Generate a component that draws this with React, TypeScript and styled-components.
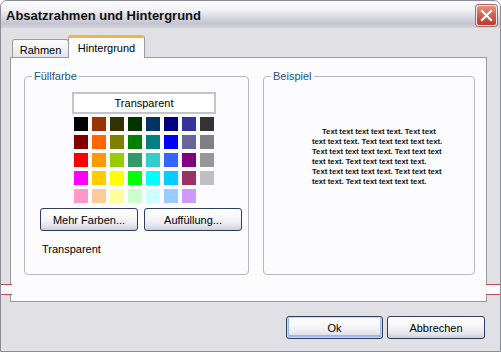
import styled, { createGlobalStyle } from "styled-components";

const GlobalStyle = createGlobalStyle`
  body {
    margin: 0;
    background: #ffffff;
    font-family: "Liberation Sans", Arial, sans-serif;
  }
`;

const Window = styled.div`
  position: relative;
  box-sizing: border-box;
  width: 501px;
  height: 352px;
  display: flex;
  flex-direction: column;
  background: #e1e0e5;
  border: 1px solid #8c8c98;
  border-radius: 7px 7px 0 0;
  overflow: hidden;
`;

const TitleBar = styled.div`
  display: flex;
  align-items: center;
  justify-content: space-between;
  height: 27px;
  padding: 0 3px 0 5px;
  background: linear-gradient(#fdfdfe 0%, #f4f4f7 30%, #d9d9e2 60%, #c3c3cf 85%, #d6d6de 100%);
`;

const Title = styled.span`
  font-size: 13px;
  font-weight: bold;
  color: #111111;
  padding-top: 2px;
`;

const CloseButton = styled.div`
  box-sizing: border-box;
  width: 21px;
  height: 21px;
  margin-top: 2px;
  display: flex;
  align-items: center;
  justify-content: center;
  border: 1px solid #f3e6e6;
  border-radius: 3px;
  background: linear-gradient(#e9937f, #d15a44 55%, #b93a2b);
  box-shadow: 0 0 0 1px #a86a66;
`;

const Body = styled.div`
  flex: 1;
  display: flex;
  flex-direction: column;
  padding: 7px 12px 0 9px;
`;

const TabStrip = styled.div`
  display: flex;
  align-items: flex-end;
  height: 22px;
  padding-left: 2px;
  position: relative;
  z-index: 1;
`;

const Tab = styled.div<{ $active?: boolean }>`
  box-sizing: border-box;
  display: flex;
  align-items: center;
  justify-content: center;
  font-size: 11px;
  color: #000000;
  border: 1px solid #9a9aa4;
  border-bottom: none;
  border-radius: 3px 3px 0 0;
  height: ${({ $active }) => ($active ? "23px" : "18px")};
  width: ${({ $active }) => ($active ? "77px" : "57px")};
  margin-bottom: ${({ $active }) => ($active ? "-1px" : "0")};
  margin-left: ${({ $active }) => ($active ? "-1px" : "0")};
  padding-top: ${({ $active }) => ($active ? "0" : "2px")};
  background: ${({ $active }) =>
    $active ? "#fcfcfe" : "linear-gradient(#fefefe, #f0f0f4 60%, #e3e3ea)"};
  border-top: ${({ $active }) => ($active ? "3px solid #f0b44c" : "1px solid #9a9aa4")};
`;

const Panel = styled.div`
  box-sizing: border-box;
  width: 477px;
  height: 245px;
  display: flex;
  gap: 14px;
  padding: 12px 0 0 13px;
  background: #fcfcfe;
  border: 1px solid #9a9aa4;
`;

const Group = styled.fieldset<{ $width: number }>`
  box-sizing: border-box;
  width: ${({ $width }) => $width}px;
  height: 205px;
  margin: 0;
  padding: 0;
  min-width: 0;
  border: 1px solid #b8b8c2;
  border-radius: 4px;
`;

const Legend = styled.legend`
  margin-left: 7px;
  padding: 0 2px;
  font-size: 11px;
  line-height: 13px;
  color: #1d5486;
`;

const TransparentBox = styled.div`
  box-sizing: border-box;
  width: 144px;
  height: 22px;
  margin: 9px 0 0 47px;
  display: flex;
  align-items: center;
  justify-content: center;
  border: 2px solid #c4c4cc;
  background: #ffffff;
  font-size: 11px;
  color: #000000;
`;

const Swatches = styled.div`
  display: grid;
  grid-template-columns: repeat(8, 14px);
  grid-auto-rows: 14px;
  gap: 4px;
  margin: 3px 0 0 49px;
`;

const Swatch = styled.div<{ $color: string }>`
  background: ${({ $color }) => $color};
`;

const ButtonRow = styled.div`
  display: flex;
  gap: 6px;
  margin: 5px 0 0 15px;
`;

const PushButton = styled.div<{ $width: number; $default?: boolean }>`
  box-sizing: border-box;
  width: ${({ $width }) => $width}px;
  height: 23px;
  display: flex;
  align-items: center;
  justify-content: center;
  font-size: 11px;
  color: #000000;
  border: 1px solid #2f3d62;
  border-radius: 3px;
  background: linear-gradient(#ffffff, #f6f6f9 45%, #e4e4ec 80%, #cdcdda);
  box-shadow: ${({ $default }) =>
    $default ? "inset 0 0 0 1px #c9d8f2, inset 0 -1px 0 2px #9fb8e6" : "none"};
`;

const StatusLabel = styled.div`
  margin: 12px 0 0 17px;
  font-size: 11px;
  line-height: 13px;
  color: #000000;
`;

const SampleText = styled.div`
  margin: 44px 0 0 48px;
  font-size: 7.7px;
  font-weight: bold;
  line-height: 10px;
  color: #111111;
  white-space: nowrap;
`;

const SampleLine = styled.div<{ $indent?: boolean }>`
  padding-left: ${({ $indent }) => ($indent ? "10px" : "0")};
`;

const Footer = styled.div`
  display: flex;
  justify-content: flex-end;
  gap: 4px;
  margin-top: 14px;
  padding-right: 3px;
`;

const EdgeGlitch = styled.div<{ $side: "left" | "right" }>`
  position: absolute;
  top: 283px;
  ${({ $side }) => ($side === "left" ? "left: -1px; width: 12px;" : "right: -1px; width: 15px;")}
  height: 9px;
  background: #fcfcfe;
  border-top: 1px solid #c94a4a;
  border-bottom: 1px solid #c94a4a;
`;

const palette = [
  "#000000", "#993300", "#333300", "#003300", "#003366", "#000080", "#333399", "#333333",
  "#800000", "#ff6600", "#808000", "#008000", "#008080", "#0000ff", "#666699", "#808080",
  "#ff0000", "#ff9900", "#99cc00", "#339966", "#33cccc", "#3366ff", "#800080", "#969696",
  "#ff00ff", "#ffcc00", "#ffff00", "#00ff00", "#00ffff", "#00ccff", "#993366", "#c0c0c0",
  "#ff99cc", "#ffcc99", "#ffff99", "#ccffcc", "#ccffff", "#99ccff", "#cc99ff",
];

const sample = [
  "Text text text text text. Text text",
  "text text text. Text text text text text.",
  "Text text text text text. Text text text",
  "text text. Text text text text text.",
  "Text text text text text. Text text text",
  "text text. Text text text text text.",
];

export default function App() {
  return (
    <>
      <GlobalStyle />
      <Window>
        <TitleBar>
          <Title>Absatzrahmen und Hintergrund</Title>
          <CloseButton>
            <svg width="13" height="13" viewBox="0 0 13 13">
              <path d="M2 2 L11 11 M11 2 L2 11" stroke="#ffffff" strokeWidth="2.2" strokeLinecap="square" />
            </svg>
          </CloseButton>
        </TitleBar>
        <Body>
          <TabStrip>
            <Tab>Rahmen</Tab>
            <Tab $active>Hintergrund</Tab>
          </TabStrip>
          <Panel>
            <Group $width={225}>
              <Legend>Füllfarbe</Legend>
              <TransparentBox>Transparent</TransparentBox>
              <Swatches>
                {palette.map((c, i) => (
                  <Swatch key={i} $color={c} />
                ))}
              </Swatches>
              <ButtonRow>
                <PushButton $width={98}>Mehr Farben...</PushButton>
                <PushButton $width={98}>Auffüllung...</PushButton>
              </ButtonRow>
              <StatusLabel>Transparent</StatusLabel>
            </Group>
            <Group $width={212}>
              <Legend>Beispiel</Legend>
              <SampleText>
                {sample.map((line, i) => (
                  <SampleLine key={i} $indent={i === 0}>
                    {line}
                  </SampleLine>
                ))}
              </SampleText>
            </Group>
          </Panel>
          <Footer>
            <PushButton $width={97} $default>
              Ok
            </PushButton>
            <PushButton $width={98}>Abbrechen</PushButton>
          </Footer>
        </Body>
        <EdgeGlitch $side="left" />
        <EdgeGlitch $side="right" />
      </Window>
    </>
  );
}
